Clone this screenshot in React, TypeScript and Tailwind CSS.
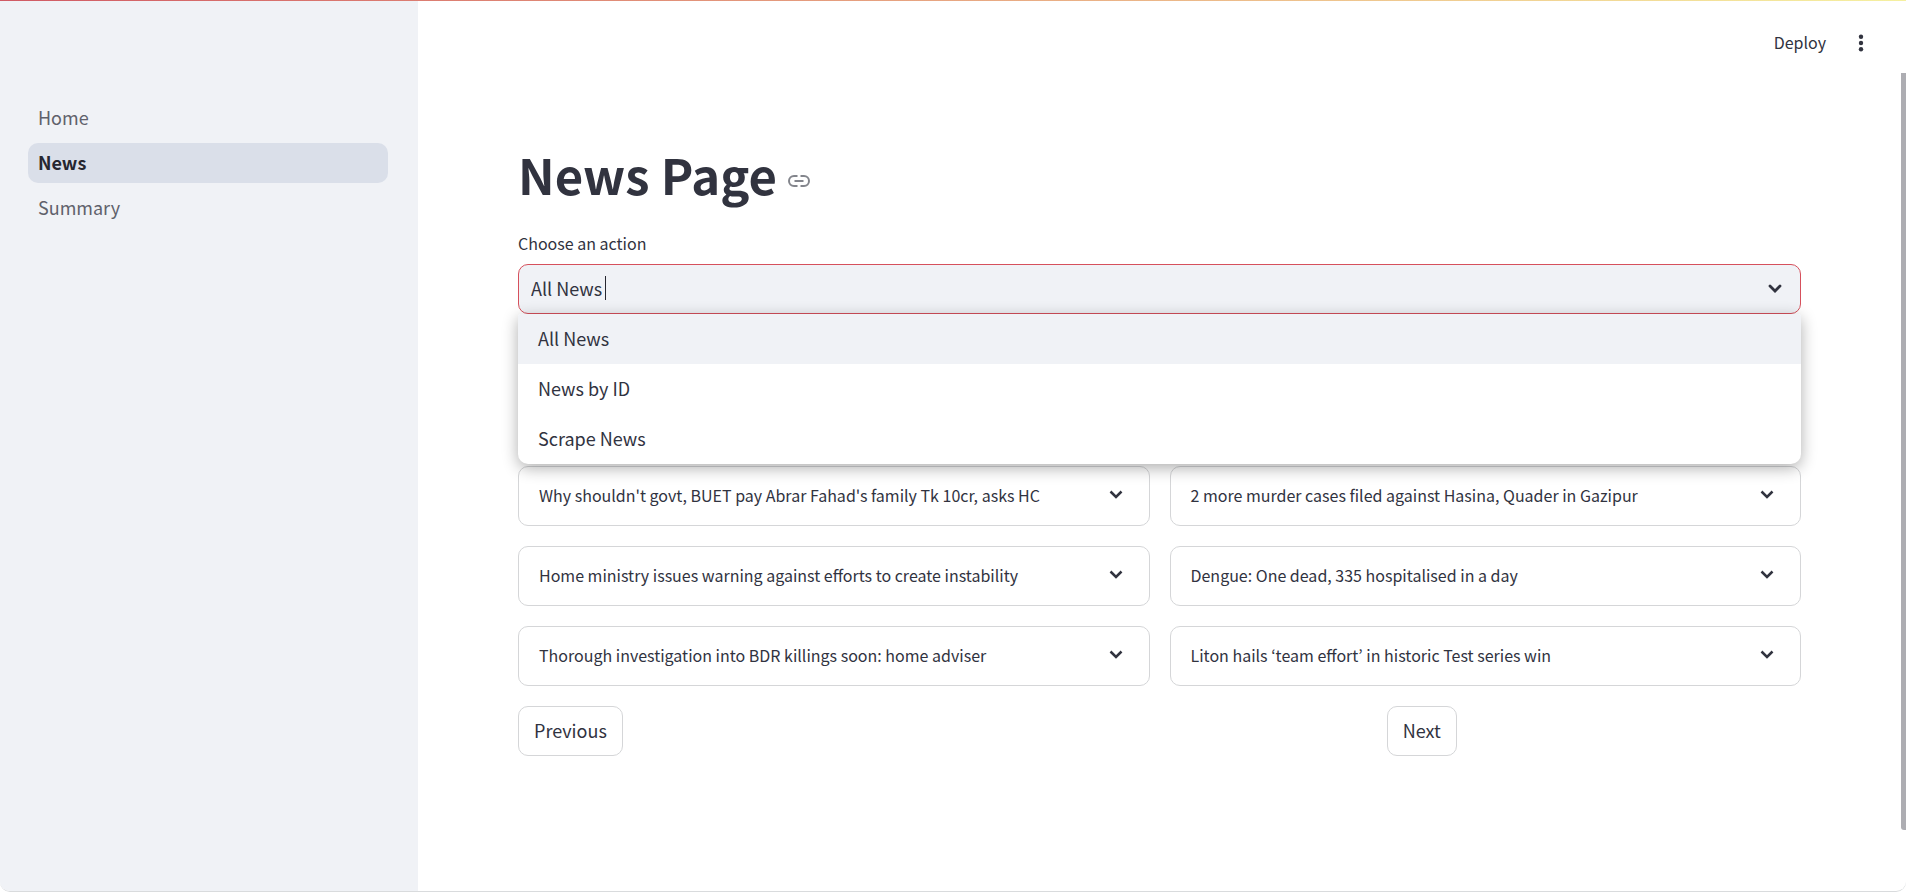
import React from "react";

const navItems = [
  { label: "Home", active: false },
  { label: "News", active: true },
  { label: "Summary", active: false },
];

const options = ["All News", "News by ID", "Scrape News"];

const articles = [
  "Why shouldn't govt, BUET pay Abrar Fahad's family Tk 10cr, asks HC",
  "2 more murder cases filed against Hasina, Quader in Gazipur",
  "Home ministry issues warning against efforts to create instability",
  "Dengue: One dead, 335 hospitalised in a day",
  "Thorough investigation into BDR killings soon: home adviser",
  "Liton hails ‘team effort’ in historic Test series win",
];

function Sidebar() {
  return (
    <aside className="w-[418px] shrink-0 bg-[#f0f2f6] px-7 pt-[98px]">
      <nav className="mr-[2px] flex flex-col gap-[5px]">
        {navItems.map((item) => (
          <a
            key={item.label}
            href="#"
            aria-current={item.active ? "page" : undefined}
            className={
              item.active
                ? "flex h-10 items-center rounded-[10px] bg-[#dadfe9] px-[10px] pb-[2px] text-[18px] leading-7 font-bold text-[#262730]"
                : "flex h-10 items-center rounded-[10px] px-[10px] pb-[2px] text-[18px] leading-7 text-[#5f616b]"
            }
          >
            {item.label}
          </a>
        ))}
      </nav>
    </aside>
  );
}

function ActionSelect() {
  return (
    <div className="flex flex-col">
      <label htmlFor="action" className="mb-[7px] text-[16px] leading-7">
        Choose an action
      </label>
      <div className="relative">
        <div className="flex h-[50px] items-center rounded-[10px] border border-[#d6505c] bg-[#f0f2f6] pr-[18px] pb-[2px] pl-3">
          <input
            id="action"
            type="text"
            role="combobox"
            aria-expanded="true"
            aria-controls="action-options"
            defaultValue="All News"
            className="mr-[3px] field-sizing-content bg-transparent text-[18px] outline-none"
          />
          <span className="h-6 w-px bg-[#262730]" />
          <svg
            viewBox="0 0 14 9"
            className="ml-auto w-[14px]"
            fill="none"
            stroke="currentColor"
            strokeWidth="2.8"
            strokeLinecap="round"
            aria-hidden="true"
          >
            <path d="M2 2l5 5 5-5" />
          </svg>
        </div>
        <ul
          id="action-options"
          role="listbox"
          className="absolute inset-x-0 top-full z-10 overflow-hidden rounded-t-[3px] rounded-b-[10px] bg-white shadow-[0_4px_16px_rgba(0,0,0,0.32)]"
        >
          {options.map((option, i) => (
            <li
              key={option}
              role="option"
              aria-selected={i === 0}
              className="flex h-[50px] items-center px-5 pb-[2px] text-[18px] aria-selected:bg-[#f0f2f6]"
            >
              {option}
            </li>
          ))}
        </ul>
      </div>
    </div>
  );
}

export default function App() {
  return (
    <div className="relative flex min-h-screen overflow-hidden rounded-b-[10px] border-b border-[#d9dbdd] bg-white font-['Noto_Sans_CJK_KR',sans-serif] text-[#31333f]">
      <div className="absolute inset-x-0 top-0 h-px bg-linear-to-r from-[#d05a64] to-[#f5f0a0]" />
      <Sidebar />
      <div className="relative flex min-w-0 grow flex-col">
        <header className="flex h-[73px] items-center justify-end gap-[21px] pt-[13px] pr-8">
          <button type="button" className="pb-[2px] text-[16px] leading-7">
            Deploy
          </button>
          <button type="button" aria-label="Main menu" className="flex w-[27px] justify-center">
            <svg viewBox="0 0 6 18" className="h-[18px]" fill="currentColor" aria-hidden="true">
              <circle cx="3" cy="2.700" r="2.200" />
              <circle cx="3" cy="9" r="2.200" />
              <circle cx="3" cy="15.300" r="2.200" />
            </svg>
          </button>
        </header>
        <main className="mr-[5px] flex flex-col px-[100px] pt-[68px]">
          <div className="mb-[22px] flex items-center gap-[11px]">
            <h1 className="text-[49px] leading-[66px] font-bold">News Page</h1>
            <a href="#news-page" aria-label="Link to heading" className="pt-[14px] text-[#83858c]">
              <svg
                viewBox="0 0 22 12"
                className="w-[22px]"
                fill="none"
                stroke="currentColor"
                strokeWidth="2"
                aria-hidden="true"
              >
                <path d="M9.500 1H6a5 5 0 0 0 0 10h3.500M12.500 1H16a5 5 0 0 1 0 10h-3.500M6.500 6h9" />
              </svg>
            </a>
          </div>
          <ActionSelect />
          <div className="mt-[152px] grid grid-cols-2 gap-5">
            {articles.map((title) => (
              <button
                key={title}
                type="button"
                className="flex h-[60px] items-center justify-between rounded-[10px] border border-[#d5d6d8] pr-[26px] pb-[2px] pl-5 text-left text-[16px]"
              >
                {title}
                <svg
                  viewBox="0 0 14 11"
                  className="w-[14px]"
                  fill="none"
                  stroke="currentColor"
                  strokeWidth="2.500"
                  aria-hidden="true"
                >
                  <path d="M1.500 1.500 7 7l5.500-5.500" />
                </svg>
              </button>
            ))}
          </div>
          <div className="mt-5 grid grid-cols-3 gap-5">
            <button
              type="button"
              className="h-[50px] justify-self-start rounded-[10px] border border-[#d5d6d8] px-[15px] pb-[2px] text-[18px]"
            >
              Previous
            </button>
            <button
              type="button"
              className="col-start-3 h-[50px] justify-self-start rounded-[10px] border border-[#d5d6d8] px-[15px] pb-[2px] text-[18px]"
            >
              Next
            </button>
          </div>
        </main>
        <div className="absolute top-[73px] right-0 h-[757px] w-[5px] rounded-bl-[3px] bg-[#adadb2]" />
      </div>
    </div>
  );
}
